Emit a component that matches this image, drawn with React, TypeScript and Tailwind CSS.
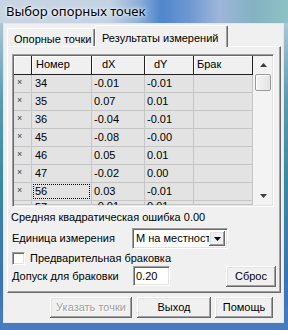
const rows = [
  ["34", "-0.01", "-0.01"],
  ["35", "0.07", "0.01"],
  ["36", "-0.04", "-0.01"],
  ["45", "-0.08", "-0.00"],
  ["46", "0.05", "0.01"],
  ["47", "-0.02", "0.00"],
  ["56", "0.03", "-0.01"],
  ["57", "-0.01", "0.01"],
];

const raised =
  "shadow-[inset_-1px_-1px_#696969,inset_1px_1px_#ffffff,inset_-2px_-2px_#a0a0a0,inset_2px_2px_#e3e3e3]";
const sunken =
  "border border-t-[#a0a0a0] border-l-[#a0a0a0] border-r-white border-b-white shadow-[inset_1px_1px_#696969,inset_-1px_-1px_#e3e3e3]";

function Arrow({ down }: { down?: boolean }) {
  return (
    <svg width="7" height="4" viewBox="0 0 7 4">
      <path d={down ? "M0 0H7L3.5 4Z" : "M0 4H7L3.5 0Z"} fill="#3c3c3c" />
    </svg>
  );
}

function Button({ label, w, disabled }: { label: string; w: string; disabled?: boolean }) {
  return (
    <div
      className={`${w} h-[21px] flex items-center justify-center bg-[#f0f0f0] ${raised} ${
        disabled ? "text-[#a0a0a0] [text-shadow:1px_1px_#ffffff]" : "text-black"
      }`}
    >
      {label}
    </div>
  );
}

function DataGrid() {
  return (
    <div className={`w-[262px] h-[153px] p-px ${sunken}`}>
      <div className="flex h-full overflow-hidden">
        <div className="w-[239px] flex flex-col">
          <div className="flex h-[19px] bg-[#f0f0f0] leading-[17px] shrink-0">
            <div className="w-[18px] border-r border-b border-[#202020] shadow-[inset_1px_1px_#ffffff]" />
            <div className="w-[60px] pl-[4px] border-r border-b border-[#202020] shadow-[inset_1px_1px_#ffffff]">Номер</div>
            <div className="w-[53px] pl-[10px] border-r border-b border-[#202020] shadow-[inset_1px_1px_#ffffff]">dX</div>
            <div className="w-[49px] pl-[9px] border-r border-b border-[#202020] shadow-[inset_1px_1px_#ffffff]">dY</div>
            <div className="w-[59px] pl-[3px] border-r border-b border-[#202020] shadow-[inset_1px_1px_#ffffff]">Брак</div>
          </div>
          {rows.map(([n, dx, dy], i) => (
            <div
              key={n}
              className={`flex shrink-0 bg-[#e3e3e3] ${
                i === rows.length - 1 ? "h-[4px] overflow-hidden leading-[11px]" : "h-[18px] leading-[17px]"
              }`}
            >
              <div className="w-[18px] pl-[3px] border-r border-b border-[#c5c5c5] text-[9px] text-[#404040] leading-[14px]">
                {i === rows.length - 1 ? "" : "×"}
              </div>
              <div className="w-[60px] border-r border-b border-[#c5c5c5] p-px">
                <div
                  className={`h-full pl-[2px] ${i === rows.length - 1 ? "" : "leading-[15px]"} ${
                    n === "56" ? "outline outline-1 outline-dotted outline-black -outline-offset-1" : ""
                  }`}
                >
                  {n}
                </div>
              </div>
              <div className="w-[53px] pl-[2px] border-r border-b border-[#c5c5c5]">{dx}</div>
              <div className="w-[49px] pl-[2px] border-r border-b border-[#c5c5c5]">{dy}</div>
              <div className="w-[59px] border-r border-b border-[#c5c5c5]" />
            </div>
          ))}
        </div>
        <div className="w-[19px] flex flex-col bg-[#f3f3f3] pl-px">
          <div className="h-[18px] flex items-center justify-center">
            <Arrow />
          </div>
          <div className="h-[17px] mx-px rounded-[2px] border border-[#9a9a9a] bg-[linear-gradient(90deg,#f4f4f4,#e4e4e4)] shadow-[inset_1px_1px_#ffffff]" />
          <div className="flex-1" />
          <div className="h-[18px] flex items-center justify-center">
            <Arrow down />
          </div>
        </div>
      </div>
    </div>
  );
}

export default function App() {
  return (
    <div className="w-[288px] h-[330px] flex flex-col bg-[linear-gradient(180deg,#c3d3e3_0%,#5a9bb0_30%,#3a8a9e_55%,#3a74b6_85%,#4a7cc0_100%)] font-['Liberation_Sans',sans-serif] text-[11px] text-black overflow-hidden">
      <div className="h-[23px] shrink-0 pl-[6px] pt-[3px] bg-[linear-gradient(90deg,#c8d4e1_0%,#c4d3e3_38%,#8fb0d8_48%,#4f86cc_56%,#6f98d2_66%,#9db6da_76%,#84b2c2_88%,#8cc2c4_100%)] font-['Noto_Sans',sans-serif] text-[13px] leading-[17px] [text-shadow:0_0_6px_#ffffff,0_0_3px_#ffffff]">
        Выбор опорных точек
      </div>
      <div className="ml-[3px] mr-[4px] h-[300px] shrink-0 border border-[#dfe7ef] bg-[#f0f0f0] flex flex-col pl-[3px] pr-[2px] pt-px">
        <div className="flex items-end h-[21px] shrink-0">
          <div className="w-[88px] h-[18px] pl-[6px] pt-[2px] border-l border-t border-white border-r border-r-[#696969] rounded-tl-[2px] rounded-tr-[2px] shadow-[inset_-1px_0_#a0a0a0]">
            Опорные точки
          </div>
          <div className="relative z-10 w-[133px] h-[22px] -mb-px pl-[6px] pt-[4px] bg-[#f0f0f0] border-l border-t border-white border-r border-r-[#696969] rounded-tl-[2px] rounded-tr-[2px] shadow-[inset_-1px_0_#a0a0a0]">
            Результаты измерений
          </div>
        </div>
        <div className="h-[247px] shrink-0 flex flex-col border-l border-t border-white border-r border-b border-r-[#696969] border-b-[#696969] shadow-[inset_-1px_-1px_#a0a0a0] pl-[4px] pr-[4px] pt-[7px]">
          <DataGrid />
          <div className="mt-[4px] -ml-px h-[13px] leading-[13px]">Средняя квадратическая ошибка 0.00</div>
          <div className="mt-[4px] h-[21px] flex items-center">
            <div className="w-[120px]">Единица измерения</div>
            <div className={`w-[96px] h-[21px] p-[2px] bg-white flex ${sunken}`}>
              <div className="flex-1 pl-px leading-[15px] overflow-hidden whitespace-nowrap">М на местност</div>
              <div className={`w-[16px] h-full bg-[#f0f0f0] flex items-center justify-center ${raised}`}>
                <svg width="7" height="4" viewBox="0 0 7 4">
                  <path d="M0 0H7L3.5 4Z" fill="#000000" />
                </svg>
              </div>
            </div>
          </div>
          <div className="mt-[3px] h-[13px] flex items-center">
            <div className={`w-[13px] h-[13px] bg-white ${sunken}`} />
            <div className="ml-[5px]">Предварительная браковка</div>
          </div>
          <div className="mt-px h-[20px] flex items-center">
            <div className="w-[121px]">Допуск для браковки</div>
            <div className={`w-[37px] h-[20px] bg-white pl-[2px] leading-[18px] ${sunken}`}>0.20</div>
            <div className="ml-auto">
              <Button label="Сброс" w="w-[50px]" />
            </div>
          </div>
        </div>
        <div className="mt-[4px] flex justify-end pr-[8px]">
          <Button label="Указать точки" w="w-[82px]" disabled />
          <div className="w-[5px]" />
          <Button label="Выход" w="w-[74px]" />
          <div className="w-[4px]" />
          <Button label="Помощь" w="w-[58px]" />
        </div>
      </div>
    </div>
  );
}
